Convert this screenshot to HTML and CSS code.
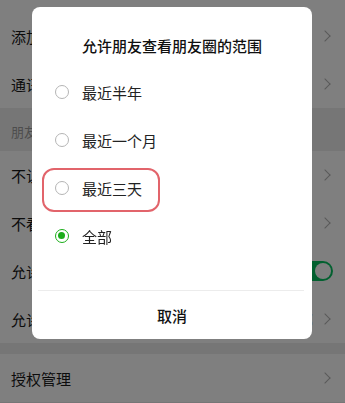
FILE: index.html
```html
<!DOCTYPE html>
<html lang="zh-CN">
<head>
<meta charset="utf-8">
<title>朋友圈权限</title>
<link rel="stylesheet" href="styles.css">
</head>
<body>
<div class="page">
  <div class="group">
    <div class="top-strip"></div>
    <div class="row"><span class="label">添加我的方式</span><span class="chev"></span></div>
    <div class="row"><span class="label">通讯录黑名单</span><span class="chev"></span></div>
  </div>
  <div class="section">朋友圈</div>
  <div class="group">
    <div class="row"><span class="label">不让他(她)看</span><span class="chev"></span></div>
    <div class="row"><span class="label">不看他(她)</span><span class="chev"></span></div>
    <div class="row"><span class="label">允许陌生人查看十条朋友圈</span><span class="switch"><span class="knob"></span></span></div>
    <div class="row"><span class="label">允许朋友查看朋友圈的范围</span><span class="value">全部</span><span class="chev"></span></div>
  </div>
  <div class="gap"></div>
  <div class="group">
    <div class="row"><span class="label">授权管理</span><span class="chev"></span></div>
  </div>
</div>

<div class="mask"></div>

<div class="dialog">
  <div class="dialog-title">允许朋友查看朋友圈的范围</div>
  <div class="options">
    <div class="option"><span class="radio"></span><span class="opt-text">最近半年</span></div>
    <div class="option"><span class="radio"></span><span class="opt-text">最近一个月</span></div>
    <div class="option marked"><span class="radio"></span><span class="opt-text">最近三天</span><span class="mark"></span></div>
    <div class="option"><span class="radio checked"></span><span class="opt-text">全部</span></div>
  </div>
  <div class="divider"></div>
  <div class="cancel">取消</div>
</div>
</body>
</html>
```

FILE: styles.css
```css
* { box-sizing: border-box; }

html, body {
  margin: 0;
  padding: 0;
  background: #ededed;
  font-family: "Noto Sans CJK SC", "Noto Sans", sans-serif;
}

.page {
  width: 345px;
  height: 403px;
  overflow: hidden;
}

.group {
  background: #fff;
}

.top-strip {
  height: 12px;
}

.row {
  height: 48px;
  display: flex;
  align-items: center;
  padding: 0 15px 0 11px;
  font-size: 15px;
  color: #191919;
}

.label {
  flex: 1;
  white-space: nowrap;
}

.value {
  color: #888;
  margin-right: 8px;
}

.chev {
  width: 8px;
  height: 8px;
  border-top: 1.5px solid #b2b2b2;
  border-right: 1.5px solid #b2b2b2;
  transform: rotate(45deg);
  margin-right: 1px;
}

.switch {
  width: 40px;
  height: 20px;
  border-radius: 10px;
  background: #07c160;
  display: flex;
  align-items: center;
  justify-content: flex-end;
  padding: 2px;
  margin-right: -3px;
}

.knob {
  width: 16px;
  height: 16px;
  border-radius: 50%;
  background: #fff;
}

.section {
  height: 43px;
  display: flex;
  align-items: center;
  padding: 4px 11px 0;
  font-size: 13px;
  color: #9a9a9a;
}

.gap {
  height: 11px;
}

.mask {
  position: fixed;
  inset: 0;
  background: rgba(0, 0, 0, 0.5);
}

.dialog {
  position: fixed;
  left: 32px;
  top: 7px;
  width: 280px;
  background: #fff;
  border-radius: 8px;
}

.dialog-title {
  height: 61px;
  padding-top: 15px;
  display: flex;
  align-items: center;
  justify-content: center;
  font-size: 15px;
  font-weight: 500;
  color: #111;
}

.options {
  padding-bottom: 30px;
}

.option {
  position: relative;
  height: 48px;
  display: flex;
  align-items: center;
  padding-left: 23px;
  font-size: 15px;
  color: #222;
}

.radio {
  width: 14px;
  height: 14px;
  border-radius: 50%;
  border: 1.3px solid #b5b5b5;
  margin-right: 13px;
  flex: none;
}

.radio.checked {
  border: 1.5px solid #1aad19;
  position: relative;
}

.radio.checked::after {
  content: "";
  position: absolute;
  left: 2px;
  top: 2px;
  width: 7px;
  height: 7px;
  border-radius: 50%;
  background: #1aad19;
}

.mark {
  position: absolute;
  left: 10px;
  top: 4px;
  width: 118px;
  height: 44px;
  border: 2px solid #e2646b;
  border-radius: 12px;
}

.divider {
  height: 1px;
  margin: 0 8px 0 6px;
  background: #ececec;
}

.cancel {
  height: 48px;
  display: flex;
  align-items: center;
  justify-content: center;
  font-size: 15px;
  font-weight: 500;
  color: #111;
}
```
